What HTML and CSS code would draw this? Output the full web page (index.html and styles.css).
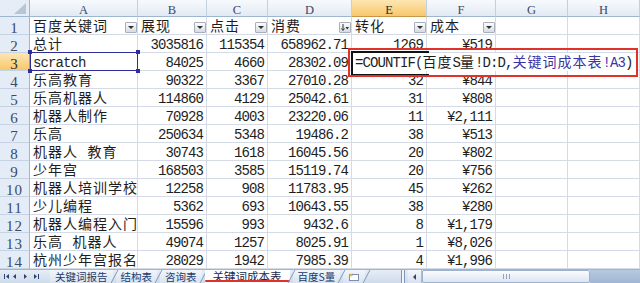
FILE: index.html
```html
<!DOCTYPE html>
<html lang="zh-CN">
<head>
    <meta charset="UTF-8">
    <title>关键词成本表</title>
    <link rel="stylesheet" href="styles.css">
</head>
<body>
    <div class="sheet">
        <div class="row hdr">
            <div class="corner">
                <svg width="29" height="16" viewBox="0 0 29 16"><polygon points="14,14 26,14 26,3" fill="#b7c5d8"/></svg>
            </div>
            <div class="colh">A</div>
            <div class="colh">B</div>
            <div class="colh">C</div>
            <div class="colh">D</div>
            <div class="colh on">E</div>
            <div class="colh">F</div>
            <div class="colh">G</div>
            <div class="colh">H</div>
        </div>

        <div class="row">
            <div class="rowh">1</div>
            <div class="c t f"><span class="cjk">百度关键词</span><i class="flt"></i></div>
            <div class="c t f"><span class="cjk">展现</span><i class="flt"></i></div>
            <div class="c t f"><span class="cjk">点击</span><i class="flt"></i></div>
            <div class="c t f"><span class="cjk">消费</span><i class="flt sort"><svg width="10" height="9" viewBox="0 0 10 9"><path d="M3 1v6M1.5 5.5L3 7.5 4.5 5.5" stroke="#333" fill="none"/><polygon points="5.5,4 9,4 7.25,6.5" fill="#333"/></svg></i></div>
            <div class="c t f"><span class="cjk">转化</span><i class="flt"></i></div>
            <div class="c t f"><span class="cjk">成本</span><i class="flt"></i></div>
            <div class="c"></div>
            <div class="c"></div>
        </div>

        <div class="row">
            <div class="rowh">2</div>
            <div class="c t"><span class="cjk">总计</span></div>
            <div class="c n">3035816</div>
            <div class="c n">115354</div>
            <div class="c n">658962.71</div>
            <div class="c n">1269</div>
            <div class="c n">¥519</div>
            <div class="c"></div>
            <div class="c"></div>
        </div>

        <div class="row">
            <div class="rowh on">3</div>
            <div class="c t ref">scratch<span class="box"><i class="h1"></i><i class="h2"></i><i class="h3"></i><i class="h4"></i></span></div>
            <div class="c n">84025</div>
            <div class="c n">4660</div>
            <div class="c n">28302.09</div>
            <div class="c edit">
                <div class="fx">=COUNTIF(<span class="cjk">百度</span>S<span class="cjk">量</span>!D:D,<span class="blu"><span class="cjk">关键词成本表</span>!A3</span>)</div>
                <div class="mark"></div>
            </div>
            <div class="c"></div>
            <div class="c"></div>
            <div class="c"></div>
        </div>

        <div class="row">
            <div class="rowh">4</div>
            <div class="c t"><span class="cjk">乐高教育</span></div>
            <div class="c n">90322</div>
            <div class="c n">3367</div>
            <div class="c n">27010.28</div>
            <div class="c n">32</div>
            <div class="c n">¥844</div>
            <div class="c"></div>
            <div class="c"></div>
        </div>

        <div class="row">
            <div class="rowh">5</div>
            <div class="c t"><span class="cjk">乐高机器人</span></div>
            <div class="c n">114860</div>
            <div class="c n">4129</div>
            <div class="c n">25042.61</div>
            <div class="c n">31</div>
            <div class="c n">¥808</div>
            <div class="c"></div>
            <div class="c"></div>
        </div>

        <div class="row">
            <div class="rowh">6</div>
            <div class="c t"><span class="cjk">机器人制作</span></div>
            <div class="c n">70928</div>
            <div class="c n">4003</div>
            <div class="c n">23220.06</div>
            <div class="c n">11</div>
            <div class="c n">¥2,111</div>
            <div class="c"></div>
            <div class="c"></div>
        </div>

        <div class="row">
            <div class="rowh">7</div>
            <div class="c t"><span class="cjk">乐高</span></div>
            <div class="c n">250634</div>
            <div class="c n">5348</div>
            <div class="c n">19486.2</div>
            <div class="c n">38</div>
            <div class="c n">¥513</div>
            <div class="c"></div>
            <div class="c"></div>
        </div>

        <div class="row">
            <div class="rowh">8</div>
            <div class="c t"><span class="cjk">机器人 教育</span></div>
            <div class="c n">30743</div>
            <div class="c n">1618</div>
            <div class="c n">16045.56</div>
            <div class="c n">20</div>
            <div class="c n">¥802</div>
            <div class="c"></div>
            <div class="c"></div>
        </div>

        <div class="row">
            <div class="rowh">9</div>
            <div class="c t"><span class="cjk">少年宫</span></div>
            <div class="c n">168503</div>
            <div class="c n">3585</div>
            <div class="c n">15119.74</div>
            <div class="c n">20</div>
            <div class="c n">¥756</div>
            <div class="c"></div>
            <div class="c"></div>
        </div>

        <div class="row">
            <div class="rowh">10</div>
            <div class="c t"><span class="cjk">机器人培训学校</span></div>
            <div class="c n">12258</div>
            <div class="c n">908</div>
            <div class="c n">11783.95</div>
            <div class="c n">45</div>
            <div class="c n">¥262</div>
            <div class="c"></div>
            <div class="c"></div>
        </div>

        <div class="row">
            <div class="rowh">11</div>
            <div class="c t"><span class="cjk">少儿编程</span></div>
            <div class="c n">5362</div>
            <div class="c n">693</div>
            <div class="c n">10643.55</div>
            <div class="c n">38</div>
            <div class="c n">¥280</div>
            <div class="c"></div>
            <div class="c"></div>
        </div>

        <div class="row">
            <div class="rowh">12</div>
            <div class="c t"><span class="cjk">机器人编程入门</span></div>
            <div class="c n">15596</div>
            <div class="c n">993</div>
            <div class="c n">9432.6</div>
            <div class="c n">8</div>
            <div class="c n">¥1,179</div>
            <div class="c"></div>
            <div class="c"></div>
        </div>

        <div class="row">
            <div class="rowh">13</div>
            <div class="c t"><span class="cjk">乐高 机器人</span></div>
            <div class="c n">49074</div>
            <div class="c n">1257</div>
            <div class="c n">8025.91</div>
            <div class="c n">1</div>
            <div class="c n">¥8,026</div>
            <div class="c"></div>
            <div class="c"></div>
        </div>

        <div class="row">
            <div class="rowh">14</div>
            <div class="c t"><span class="cjk">杭州少年宫报名</span></div>
            <div class="c n">28029</div>
            <div class="c n">1942</div>
            <div class="c n">7985.39</div>
            <div class="c n">4</div>
            <div class="c n">¥1,996</div>
            <div class="c"></div>
            <div class="c"></div>
        </div>
    </div>

    <div class="tabbar">
        <div class="nav">
            <svg width="50" height="13" viewBox="0 0 50 13">
                <g fill="#2b4272">
                    <rect x="4" y="4" width="1" height="5"/><polygon points="9,4 9,9 6,6.5"/>
                    <polygon points="16,4 16,9 13,6.5"/>
                    <polygon points="24,4 24,9 27,6.5"/>
                    <polygon points="34,4 34,9 37,6.5"/><rect x="38" y="4" width="1" height="5"/>
                </g>
            </svg>
        </div>
        <div class="tabs">
            <span class="tab">关键词报告</span><span class="sep"></span>
            <span class="tab">结构表</span><span class="sep"></span>
            <span class="tab">咨询表</span><span class="sep"></span>
            <span class="tab act">关键词成本表</span><span class="sep"></span>
            <span class="tab">百度S量</span><span class="sep"></span>
            <span class="tab new">
                <svg width="14" height="11" viewBox="0 0 14 11"><rect x="2.5" y="3.5" width="9" height="6" fill="#fff" stroke="#7d8fae"/><path d="M3 2l1 1.5L5.5 2 5 4l1.5 1H4.5L4 6.5 3.5 5h-2L3 4z" fill="#f2b233"/></svg>
            </span><span class="sep"></span>
        </div>
        <div class="gap"></div>
        <div class="split"></div>
        <div class="sbtn">
            <svg width="8" height="8" viewBox="0 0 8 8"><polygon points="5,1 5,7 2,4" fill="#2b4272"/></svg>
        </div>
        <div class="thumb"><span class="grip"></span></div>
        <div class="track"></div>
    </div>
</body>
</html>
```

FILE: styles.css
```css
* {
    box-sizing: border-box;
}
body {
    margin: 0;
    width: 640px;
    height: 283px;
    overflow: hidden;
    background: #fff;
    font-family: "Liberation Mono", "Noto Sans CJK SC", monospace;
    color: #1e1e1e;
}
.row {
    display: grid;
    grid-template-columns: 30px 108px 69px 61px 84px 75px 69px 72px 72px;
    grid-template-rows: 18px;
    height: 18px;
}
.row.hdr {
    grid-template-rows: 17px;
    height: 17px;
}
.corner {
    background: #e6edf6;
    border-right: 1px solid #9eb6ce;
    border-bottom: 1px solid #9eb6ce;
}
.corner svg {
    display: block;
}
.colh {
    background: linear-gradient(#f7fafd, #e3eaf4);
    border-right: 1px solid #c3d0e0;
    border-bottom: 1px solid #9eb6ce;
    text-align: center;
    padding-top: 2px;
    font: 12.5px/17px "Liberation Serif", serif;
    color: #3b4a66;
}
.colh.on {
    background: linear-gradient(#fde6b4, #f7c86a);
    border-bottom-color: #c6974a;
    color: #2d2d2d;
}
.rowh {
    background: #e4ecf7;
    border-right: 1px solid #9eb6ce;
    border-bottom: 1px solid #c5d3e3;
    text-align: center;
    padding-top: 2px;
    font: 15px/18px "Liberation Serif", serif;
    letter-spacing: 1px;
    color: #3b4a66;
}
.rowh.on {
    background: linear-gradient(#fde6b4, #f7c86a);
    border-right-color: #c6974a;
    color: #2d2d2d;
}
.c {
    border-right: 1px solid #d5dbe6;
    border-bottom: 1px solid #d5dbe6;
    font-size: 14px;
    line-height: 17px;
    letter-spacing: -0.9px;
    padding-top: 2px;
    white-space: nowrap;
}
.t {
    padding-left: 3px;
}
.n {
    text-align: right;
    padding-right: 3px;
}
.cjk {
    letter-spacing: 1px;
}
.f {
    display: flex;
    justify-content: space-between;
    align-items: flex-start;
}
.flt {
    align-self: flex-end;
    margin-bottom: 1px;
    width: 12px;
    height: 11px;
    border: 1px solid #a7afbd;
    border-radius: 1px;
    background: linear-gradient(#fcfcfc, #d8dce3);
    display: flex;
    align-items: center;
    justify-content: center;
}
.flt::before {
    content: "";
    border-left: 3px solid transparent;
    border-right: 3px solid transparent;
    border-top: 3px solid #333;
}
.flt.sort::before {
    display: none;
}
.flt svg {
    display: block;
}

/* referenced cell A3 while the formula is edited */
.ref {
    position: relative;
}
.box {
    position: absolute;
    left: 0;
    top: -1px;
    right: -1px;
    bottom: -1px;
    border: 1px solid #2d2d9e;
}
.box i {
    position: absolute;
    width: 4px;
    height: 4px;
    background: #2d2d9e;
}
.box .h1 { left: -3px; top: -3px; }
.box .h2 { right: -3px; top: -3px; }
.box .h3 { left: -3px; bottom: -3px; }
.box .h4 { right: -3px; bottom: -3px; }

/* cell E3 in edit mode, text runs over F:H */
.edit {
    position: relative;
}
.edit::after {
    content: "";
    position: absolute;
    left: -1px;
    top: -2px;
    width: 76px;
    height: 21px;
    border: 2px solid #111;
    border-right: 0;
    z-index: 3;
}
.fx {
    position: absolute;
    left: 0;
    top: 0;
    width: 284px;
    height: 18px;
    padding: 2px 0 0 3px;
    background: #fff;
    z-index: 2;
}
.blu {
    color: #3b35a6;
}
.mark {
    position: absolute;
    left: -4px;
    top: -5px;
    width: 290px;
    height: 29px;
    border: 2px solid #e0312b;
    z-index: 4;
}

/* sheet tabs and horizontal scrollbar */
.tabbar {
    display: flex;
    height: 14px;
    background: linear-gradient(#e6edf6, #cfdbeb);
    border-top: 1px solid #9eb6ce;
    font-family: "Noto Sans CJK SC", sans-serif;
    color: #213a6b;
}
.nav {
    width: 50px;
}
.nav svg {
    display: block;
}
.tabs {
    display: flex;
    align-items: stretch;
}
.tab {
    padding: 0 5px;
    font-size: 10.5px;
    line-height: 13px;
    background: linear-gradient(#f2f6fb, #d9e3f0);
    white-space: nowrap;
}
.tab.act {
    position: relative;
    padding: 0 8px;
    font-size: 11.5px;
    background: #fff;
    color: #1d2a44;
}
.tab.act::after {
    content: "";
    position: absolute;
    left: 0;
    right: 0;
    bottom: 1px;
    height: 2px;
    background: #e0312b;
    border-radius: 1px;
}
.tab.new {
    padding: 1px 4px 0;
}
.tab.new svg {
    display: block;
}
.sep {
    width: 1px;
    margin: 0 1px;
    background: #7f98bd;
    transform: skewX(-28deg);
}
.gap {
    flex: 1;
}
.split {
    width: 4px;
    margin: 0 3px 0 0;
    background: #f1f5fa;
    border-left: 1px solid #7d95ba;
    border-right: 1px solid #7d95ba;
}
.sbtn {
    width: 14px;
    display: flex;
    align-items: center;
    justify-content: center;
    background: linear-gradient(#f4f7fb, #d7e1ee);
    border-right: 1px solid #a9bbd4;
}
.thumb {
    width: 168px;
    display: flex;
    align-items: center;
    justify-content: center;
    background: linear-gradient(#fbfcfe, #dbe5f1);
    border: 1px solid #9db2cf;
    border-radius: 2px;
}
.grip {
    width: 7px;
    height: 5px;
    border-left: 1px solid #8ea4c3;
    border-right: 1px solid #8ea4c3;
    background: linear-gradient(90deg, transparent 2px, #8ea4c3 2px, #8ea4c3 3px, transparent 3px);
}
.track {
    width: 50px;
    background: linear-gradient(#b7c9df, #9fb6d4);
}
```
